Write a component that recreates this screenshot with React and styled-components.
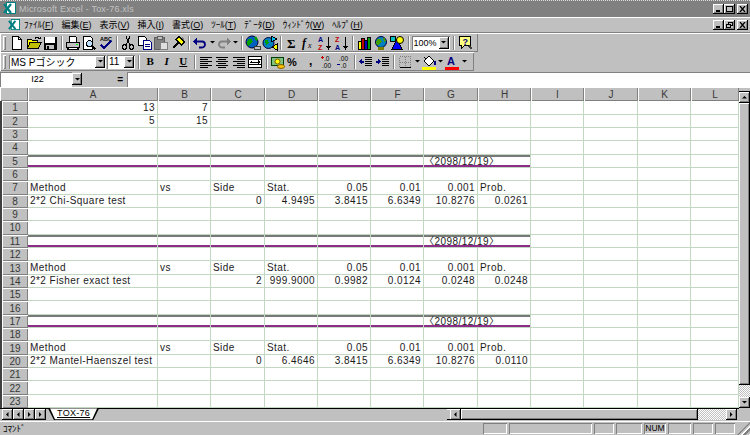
import React from 'react'
import styled, { createGlobalStyle } from 'styled-components'

const GlobalStyle = createGlobalStyle`
  html, body { margin: 0; padding: 0; background: #c0c0c0; }
  body { font-family: 'Liberation Sans', 'Noto Sans CJK JP', sans-serif; }
`

const raised = `box-shadow: inset -1px -1px #000, inset 1px 1px #fff, inset -2px -2px #808080;`
const sunken = `box-shadow: inset 1px 1px #808080, inset -1px -1px #fff;`
const stipple = `background: repeating-conic-gradient(#fff 0 25%, #c0c0c0 0 50%) 0 0 / 2px 2px;`

const Window = styled.div`
  width: 750px;
  height: 435px;
  overflow: hidden;
  background: #c0c0c0;
  display: flex;
  flex-direction: column;
`

const TitleBar = styled.div`
  height: 16px;
  border-top: 1px dotted #dfdfdf;
  background: #808080;
  display: flex;
  align-items: center;
  padding: 0 2px 0 3px;
  gap: 3px;
  color: #c0c0c0;
  font-size: 9px;
  letter-spacing: 0.2px;
`

const Caption = styled.div`
  margin-left: auto;
  display: flex;
  align-items: center;
`

const CapBtn = styled.div`
  width: 11px;
  height: 10px;
  margin-left: ${(p) => (p.$gap ? 2 : 0)}px;
  background: #c0c0c0;
  ${raised}
  display: flex;
  align-items: center;
  justify-content: center;
`

const MenuBar = styled.div`
  height: 16px;
  display: flex;
  align-items: center;
  padding: 0 2px 0 8px;
  font-size: 9px;
  color: #000;
  box-shadow: inset 0 1px #fff;
`

const MenuItem = styled.span`
  padding: 0 ${(p) => p.$pad ?? 4}px;
  white-space: nowrap;
  u { text-decoration: underline; }
`

const Toolbars = styled.div`
  display: flex;
  flex-direction: column;
  border-top: 1px solid #808080;
  box-shadow: inset 0 1px #fff;
`

const Toolbar = styled.div`
  height: 19px;
  width: ${(p) => p.$w}px;
  display: flex;
  align-items: center;
  padding-left: 2px;
  box-sizing: border-box;
  box-shadow: inset 1px 1px #fff, inset -1px -1px #808080;
`

const Grip = styled.div`
  width: 3px;
  height: 14px;
  margin: 0 3px 0 1px;
  box-shadow: inset 1px 1px #fff, inset -1px -1px #808080;
`

const Btn = styled.div`
  width: ${(p) => p.$w ?? 16.5}px;
  height: 16px;
  flex: none;
  display: flex;
  align-items: center;
  justify-content: center;
`

const Sep = styled.div`
  width: 0;
  height: 14px;
  margin: 0 ${(p) => p.$m ?? 2}px;
  border-left: 1px solid #808080;
  border-right: 1px solid #fff;
  flex: none;
`

const Combo = styled.div`
  width: ${(p) => p.$w}px;
  height: 14px;
  margin-right: 1px;
  background: #fff;
  ${sunken}
  display: flex;
  align-items: center;
  font-size: ${(p) => p.$fs ?? 10}px;
  color: #000;
  box-sizing: border-box;
  padding-left: 2px;
  flex: none;
  span { flex: 1; white-space: nowrap; }
`

const DropBtn = styled.div`
  width: 10px;
  height: 12px;
  background: #c0c0c0;
  ${raised}
  display: flex;
  align-items: center;
  justify-content: center;
  flex: none;
  margin-right: 1px;
`

const FontTxt = styled.span`
  font-family: ${(p) => (p.$serif ? "'Liberation Serif', serif" : "'Liberation Sans', sans-serif")};
  font-weight: ${(p) => (p.$bold ? 700 : 400)};
  font-style: ${(p) => (p.$italic ? 'italic' : 'normal')};
  text-decoration: ${(p) => (p.$under ? 'underline' : 'none')};
  font-size: ${(p) => p.$size ?? 11}px;
  color: ${(p) => p.$color ?? '#000'};
  line-height: 1;
`

const FormulaBar = styled.div`
  height: 16px;
  display: flex;
  align-items: center;
`

const NameBox = styled.div`
  width: 72px;
  height: 15px;
  background: #fff;
  box-sizing: border-box;
  ${sunken}
  font-size: 9px;
  text-align: center;
  padding-left: 3px;
  line-height: 15px;
  color: #000;
`

const EqBtn = styled.div`
  width: 44px;
  text-align: right;
  padding-right: 4px;
  box-sizing: border-box;
  font-size: 10px;
  font-weight: 700;
  color: #000;
`

const Formula = styled.div`
  flex: 1;
  height: 15px;
  background: #fff;
  ${sunken}
`

const Sheet = styled.div`
  height: 321px;
  display: flex;
  background: #fff;
`

const Grid = styled.div`
  width: 739px;
  height: 321px;
  display: grid;
  grid-template-columns: 28px 130px 53px 54px 53px 53px 53px 54px 53px 53px 54px 53px 48px;
  grid-template-rows: 14px repeat(24, 13.35px);
  overflow: hidden;
  background: #fff;
`

const Head = styled.div`
  background: #c0c0c0;
  box-shadow: inset 1px 1px #fff, inset -1px -1px #808080;
  font-size: 10px;
  color: #383838;
  display: flex;
  align-items: center;
  justify-content: center;
  ${(p) => p.$row && 'border-left: 2px solid #404040; box-sizing: border-box;'}
`

const line = '#c2d8c2'

const Cell = styled.div`
  border-right: ${(p) => (p.$open ? 'none' : `1px solid ${line}`)};
  border-bottom: 1px solid ${line};
  box-shadow: ${(p) => (p.$band ? 'inset 0 2px #787878, inset 0 -2px #8a2c88' : 'none')};
  font-size: 10px;
  letter-spacing: 0.45px;
  color: #1a1a1a;
  padding: 0 ${(p) => (p.$open ? 0 : 2)}px;
  white-space: nowrap;
  display: flex;
  align-items: center;
  justify-content: ${(p) => (p.$right ? 'flex-end' : 'flex-start')};
  min-width: 0;
`

const VScroll = styled.div`
  width: 11px;
  display: flex;
  flex-direction: column;
  background: #c0c0c0;
`

const ScrollBtn = styled.div`
  width: ${(p) => p.$w ?? 11}px;
  height: ${(p) => p.$h ?? 11}px;
  flex: none;
  background: #c0c0c0;
  ${raised}
  display: flex;
  align-items: center;
  justify-content: center;
`

const Track = styled.div`
  flex: none;
  width: ${(p) => p.$w ?? 11}px;
  height: ${(p) => p.$h ?? 11}px;
  ${stipple}
`

const SplitBox = styled.div`
  flex: none;
  width: ${(p) => p.$w ?? 11}px;
  height: ${(p) => p.$h ?? 11}px;
  background: #c0c0c0;
  box-shadow: inset 0 -1px #000, inset 0 1px #fff;
`

const TabBar = styled.div`
  height: 13px;
  display: flex;
  align-items: center;
  padding-left: 2px;
  box-shadow: inset 0 1px #000;
`

const NavBtn = styled.div`
  width: 11px;
  height: 11px;
  ${raised}
  display: flex;
  align-items: center;
  justify-content: center;
`

const Tab = styled.div`
  margin-left: 2px;
  height: 12px;
  align-self: flex-start;
  padding: 0 9px;
  background: #000;
  clip-path: polygon(0 0, 100% 0, calc(100% - 6px) 100%, 6px 100%);
  display: flex;
  span {
    flex: 1;
    background: #fff;
    clip-path: polygon(1px 0, calc(100% - 1px) 0, calc(100% - 6px) calc(100% - 1px), 6px calc(100% - 1px));
    margin: 0 -8px;
    padding: 0 8px;
    font-size: 9px;
    line-height: 11px;
    color: #000;
    text-decoration: underline;
    letter-spacing: 0.3px;
  }
`

const HScroll = styled.div`
  margin-left: auto;
  margin-right: 2px;
  width: 290px;
  height: 11px;
  display: flex;
`

const Corner = styled.div`
  width: 11px;
  height: 13px;
  background: #c0c0c0;
`

const StatusBar = styled.div`
  height: 14px;
  display: flex;
  align-items: center;
  padding-left: 3px;
  gap: 2px;
  font-size: 9px;
  color: #000;
  box-shadow: inset 0 1px #fff;
`

const Panel = styled.div`
  width: ${(p) => p.$w}px;
  height: 11px;
  ${sunken}
  font-size: 8.5px;
  line-height: 11px;
  text-align: center;
  color: #000;
  ${(p) => p.$first && 'margin-left: auto;'}
`

const SizeGrip = styled.div`
  width: 13px;
  height: 13px;
  align-self: flex-end;
  background: repeating-linear-gradient(135deg, #c0c0c0 0 2px, #fff 2px 3px, #808080 3px 5px);
  clip-path: polygon(100% 0, 100% 100%, 0 100%);
`

const Svg = ({ w = 16, h = 16, children }) => (
  <svg width={w} height={h} viewBox={`0 0 ${w} ${h}`} shapeRendering="crispEdges">
    {children}
  </svg>
)

const Tri = ({ dir = 'down', color = '#000' }) => {
  const pts = {
    down: '1,2 6,2 3.5,4.5',
    up: '1,4.5 6,4.5 3.5,2',
    left: '4.5,1 4.5,6 2,3.5',
    right: '2,1 2,6 4.5,3.5',
  }
  return (
    <svg width="7" height="7" viewBox="0 0 7 7">
      <polygon points={pts[dir]} fill={color} />
    </svg>
  )
}

const DropArrow = () => (
  <Btn $w={7}>
    <Tri />
  </Btn>
)

const icons = {
  new: (
    <>
      <path d="M3.5 1.5h6l3 3v10h-9z" fill="#fff" stroke="#000" />
      <path d="M9.5 1.5v3h3" fill="none" stroke="#000" />
    </>
  ),
  open: (
    <>
      <path d="M1.5 13.5v-9h4l1 1h5v2" fill="#ffff00" stroke="#000" />
      <path d="M1.5 13.5l2.5-6h11l-2.5 6z" fill="#c0c000" stroke="#000" />
      <path d="M9 3.5c1.5-2 3.5-2 4.5 0" fill="none" stroke="#000" />
      <path d="M11.5 3.5h3v-2" fill="none" stroke="#000" />
    </>
  ),
  save: (
    <>
      <rect x="1.5" y="1.5" width="13" height="13" fill="#000" />
      <rect x="3" y="2" width="10" height="6" fill="#fff" />
      <rect x="4" y="10" width="8" height="4" fill="#c0c0c0" />
      <rect x="5" y="11" width="2" height="3" fill="#000" />
    </>
  ),
  print: (
    <>
      <path d="M4.5 7.5v-6h6l1 1v5" fill="#fff" stroke="#000" />
      <path d="M1.5 7.5h13v5h-13z" fill="#c0c0c0" stroke="#000" />
      <path d="M3.5 12.5l-1 2h11l-1-2" fill="#fff" stroke="#000" />
      <rect x="11" y="9" width="2" height="1" fill="#00ff00" />
    </>
  ),
  preview: (
    <>
      <path d="M2.5 1.5h7l2 2v11h-9z" fill="#fff" stroke="#000" />
      <circle cx="8.5" cy="8.5" r="3" fill="#c0e0ff" stroke="#000" />
      <path d="M10.5 10.5l4 4" stroke="#000" strokeWidth="2" />
    </>
  ),
  spell: (
    <>
      <text x="2" y="6" fontSize="5.5" fontFamily="Liberation Sans" fontWeight="700" fill="#000">
        ABC
      </text>
      <path d="M3 10l3 3 7-7" fill="none" stroke="#000080" strokeWidth="2" />
    </>
  ),
  cut: (
    <>
      <circle cx="4.5" cy="12" r="2.2" fill="none" stroke="#000" />
      <circle cx="11.5" cy="12" r="2.2" fill="none" stroke="#000" />
      <path d="M6 10L10 1.5M10 10L6 1.5" stroke="#000" />
    </>
  ),
  copy: (
    <>
      <path d="M1.5 1.5h6l2 2v7h-8z" fill="#fff" stroke="#000" />
      <path d="M6.5 5.5h6l2 2v7h-8z" fill="#fff" stroke="#000080" />
      <path d="M8 9h5M8 11h5" stroke="#000080" />
    </>
  ),
  paste: (
    <>
      <rect x="1.5" y="2.5" width="10" height="12" fill="#808080" stroke="#606060" />
      <rect x="4" y="1" width="5" height="3" fill="#c0c0c0" stroke="#606060" />
      <rect x="7.5" y="7.5" width="7" height="7" fill="#dfdfdf" stroke="#808080" />
    </>
  ),
  painter: (
    <>
      <polygon points="9,1.5 14.5,7 11.5,10 6,4.5" fill="#ffff00" stroke="#000" />
      <path d="M8 8l-5 5" stroke="#000" strokeWidth="2" />
      <path d="M12 2.5l2 2" stroke="#808080" />
    </>
  ),
  undo: (
    <>
      <path d="M4 6.5h6a3 3 0 0 1 0 6H7" fill="none" stroke="#000080" strokeWidth="1.8" shapeRendering="auto" />
      <polygon points="1,6.5 5,3 5,10" fill="#000080" />
    </>
  ),
  redo: (
    <>
      <path d="M12 6.5H6a3 3 0 0 0 0 6h3" fill="none" stroke="#808080" strokeWidth="1.8" shapeRendering="auto" />
      <polygon points="15,6.5 11,3 11,10" fill="#808080" />
    </>
  ),
  link: (
    <>
      <circle cx="7" cy="7" r="6" fill="#0060c0" stroke="#000040" shapeRendering="auto" />
      <path d="M3 4h4l1 3-3 2-1 3-2-3zM9 2h3l1 3-2 1z" fill="#00a000" />
      <rect x="9" y="11" width="6" height="3" fill="#c0c0c0" stroke="#404040" />
    </>
  ),
  web: (
    <>
      <circle cx="6.5" cy="8" r="5.5" fill="#0080c0" stroke="#000040" shapeRendering="auto" />
      <path d="M3 5h3l1 3-3 2z" fill="#00a000" />
      <polygon points="9,1 15,4 9,7" fill="#00c0ff" stroke="#000" />
      <polygon points="15,9 10,12 15,15" fill="#ffff00" stroke="#000" />
    </>
  ),
  sum: (
    <text x="3" y="13" fontSize="13" fontFamily="Liberation Serif" fontWeight="700" fill="#000">
      Σ
    </text>
  ),
  fx: (
    <>
      <text x="1" y="12" fontSize="12" fontFamily="Liberation Serif" fontStyle="italic" fontWeight="700" fill="#000">
        f
      </text>
      <text x="7" y="13" fontSize="8" fontFamily="Liberation Serif" fontStyle="italic" fill="#000">
        x
      </text>
    </>
  ),
  sortAsc: (
    <>
      <text x="1" y="7" fontSize="7" fontFamily="Liberation Sans" fontWeight="700" fill="#000080">
        A
      </text>
      <text x="1" y="15" fontSize="7" fontFamily="Liberation Sans" fontWeight="700" fill="#c00000">
        Z
      </text>
      <path d="M11.5 2v11" stroke="#000" />
      <polygon points="9,11 14,11 11.5,15" fill="#000" />
    </>
  ),
  sortDesc: (
    <>
      <text x="1" y="7" fontSize="7" fontFamily="Liberation Sans" fontWeight="700" fill="#c00000">
        Z
      </text>
      <text x="1" y="15" fontSize="7" fontFamily="Liberation Sans" fontWeight="700" fill="#000080">
        A
      </text>
      <path d="M11.5 2v11" stroke="#000" />
      <polygon points="9,11 14,11 11.5,15" fill="#000" />
    </>
  ),
  chart: (
    <>
      <rect x="2" y="6" width="3" height="8" fill="#ffff00" stroke="#000" />
      <rect x="5" y="3" width="3" height="11" fill="#c00000" stroke="#000" />
      <rect x="8" y="5" width="3" height="9" fill="#0000c0" stroke="#000" />
      <rect x="11" y="2" width="3" height="12" fill="#00a000" stroke="#000" />
    </>
  ),
  map: (
    <>
      <circle cx="8" cy="7" r="5.5" fill="#0080c0" stroke="#000040" shapeRendering="auto" />
      <path d="M4 4h4l1 3-3 2-1 2-2-3zM10 3h2l1 3-2 1z" fill="#40a000" />
      <rect x="5" y="12" width="6" height="3" fill="#808000" />
    </>
  ),
  drawing: (
    <>
      <polygon points="3,14 8,4 13,14" fill="#0000ff" stroke="#000" />
      <circle cx="11" cy="5" r="3.5" fill="#ffff00" stroke="#000" shapeRendering="auto" />
      <rect x="1.5" y="1.5" width="5" height="5" fill="#00c0c0" stroke="#000" />
    </>
  ),
  assistant: (
    <>
      <path d="M2.5 1.5h11v9h-6l-3 3v-3h-2z" fill="#ffff80" stroke="#000" />
      <text x="5.5" y="9.5" fontSize="9" fontFamily="Liberation Sans" fontWeight="700" fill="#000080">
        ?
      </text>
      <path d="M12 11l3 3" stroke="#404040" strokeWidth="1.5" />
    </>
  ),
  alignL: <path d="M2 3.5h12M2 5.5h8M2 7.5h12M2 9.5h8M2 11.5h12M2 13.5h8" stroke="#000" />,
  alignC: <path d="M2 3.5h12M4 5.5h8M2 7.5h12M4 9.5h8M2 11.5h12M4 13.5h8" stroke="#000" />,
  alignR: <path d="M2 3.5h12M6 5.5h8M2 7.5h12M6 9.5h8M2 11.5h12M6 13.5h8" stroke="#000" />,
  merge: (
    <>
      <rect x="1.5" y="2.5" width="13" height="11" fill="#fff" stroke="#000" />
      <path d="M1.5 5.5h13M1.5 10.5h13" stroke="#000" />
      <path d="M3 8h10" stroke="#000" />
      <polygon points="3,8 5,6 5,10" fill="#000" />
      <polygon points="13,8 11,6 11,10" fill="#000" />
    </>
  ),
  currency: (
    <>
      <rect x="1.5" y="3.5" width="12" height="8" fill="#80c080" stroke="#004000" />
      <circle cx="7.5" cy="7.5" r="2.5" fill="#ffff00" stroke="#806000" shapeRendering="auto" />
      <ellipse cx="11" cy="12.5" rx="3.5" ry="2" fill="#ffc000" stroke="#806000" shapeRendering="auto" />
    </>
  ),
  percent: (
    <text x="1" y="12" fontSize="11" fontFamily="Liberation Sans" fontWeight="700" fill="#000">
      %
    </text>
  ),
  comma: (
    <text x="6" y="11" fontSize="12" fontFamily="Liberation Sans" fontWeight="700" fill="#000">
      ,
    </text>
  ),
  incDec: (
    <>
      <text x="5" y="7" fontSize="6.5" fontFamily="Liberation Sans" fill="#000">
        .0
      </text>
      <text x="3" y="14" fontSize="6.5" fontFamily="Liberation Sans" fill="#000">
        .00
      </text>
      <path d="M2 3.5h3M3.5 2v3" stroke="#c00000" />
    </>
  ),
  decDec: (
    <>
      <text x="3" y="7" fontSize="6.5" fontFamily="Liberation Sans" fill="#000">
        .00
      </text>
      <text x="5" y="14" fontSize="6.5" fontFamily="Liberation Sans" fill="#000">
        .0
      </text>
      <path d="M1 10.5h3" stroke="#000080" />
    </>
  ),
  outdent: (
    <>
      <path d="M7 3.5h7M7 5.5h7M7 7.5h7M7 9.5h7M7 11.5h7" stroke="#000" />
      <path d="M2 7.5h4" stroke="#000080" strokeWidth="2" />
      <polygon points="1,7.5 4,4.5 4,10.5" fill="#000080" />
    </>
  ),
  indent: (
    <>
      <path d="M7 3.5h7M7 5.5h7M7 7.5h7M7 9.5h7M7 11.5h7" stroke="#000" />
      <path d="M1 7.5h4" stroke="#000080" strokeWidth="2" />
      <polygon points="6,7.5 3,4.5 3,10.5" fill="#000080" />
    </>
  ),
  borders: (
    <>
      <rect x="2.5" y="2.5" width="11" height="11" fill="none" stroke="#808080" strokeDasharray="1 1" />
      <path d="M8 2.5v11M2.5 8h11" stroke="#808080" strokeDasharray="1 1" />
      <path d="M2.5 13.5h11" stroke="#000" />
    </>
  ),
  fill: (
    <>
      <polygon points="3,7 8,2 13,7 8,12" fill="#fff" stroke="#000" />
      <path d="M5 5L3 3" stroke="#000" />
      <path d="M13.5 7v4" stroke="#000080" strokeWidth="2" />
      <rect x="1" y="13" width="14" height="3" fill="#ffff00" />
    </>
  ),
  fontColor: (
    <>
      <text x="3" y="11" fontSize="11" fontFamily="Liberation Sans" fontWeight="700" fill="#000080">
        A
      </text>
      <rect x="1" y="13" width="14" height="3" fill="#ff0000" />
    </>
  ),
}

const Icon = ({ name, w }) => (
  <Btn $w={w}>
    <Svg>{icons[name]}</Svg>
  </Btn>
)

const ExcelLogo = ({ size = 13 }) => (
  <svg width={size} height={size} viewBox="0 0 13 13">
    <rect x="3.5" y="0.5" width="9" height="11" fill="#fff" stroke="#008080" />
    <path d="M1 2l7 9M8 2l-7 9" stroke="#008080" strokeWidth="2.2" />
  </svg>
)

const CapGlyph = ({ kind }) => (
  <svg width="7" height="6" viewBox="0 0 7 6" shapeRendering="crispEdges">
    {kind === 'min' && <rect x="1" y="4" width="4" height="2" fill="#000" />}
    {kind === 'max' && <rect x="0.5" y="0.5" width="6" height="5" fill="none" stroke="#000" />}
    {kind === 'restore' && (
      <>
        <rect x="2.5" y="0.5" width="4" height="3" fill="none" stroke="#000" />
        <rect x="0.5" y="2.5" width="4" height="3" fill="#c0c0c0" stroke="#000" />
      </>
    )}
    {kind === 'close' && <path d="M1 0l5 6M6 0l-5 6" stroke="#000" strokeWidth="1.3" shapeRendering="auto" />}
  </svg>
)

const CaptionButtons = ({ restore }) => (
  <Caption>
    <CapBtn>
      <CapGlyph kind="min" />
    </CapBtn>
    <CapBtn>
      <CapGlyph kind={restore ? 'restore' : 'max'} />
    </CapBtn>
    <CapBtn $gap>
      <CapGlyph kind="close" />
    </CapBtn>
  </Caption>
)

const menus = [
  ['ﾌｧｲﾙ', 'F'],
  ['編集', 'E'],
  ['表示', 'V'],
  ['挿入', 'I'],
  ['書式', 'O'],
  ['ﾂｰﾙ', 'T'],
  ['ﾃﾞｰﾀ', 'D'],
  ['ｳｨﾝﾄﾞｳ', 'W'],
  ['ﾍﾙﾌﾟ', 'H'],
]

const COLS = ['A', 'B', 'C', 'D', 'E', 'F', 'G', 'H', 'I', 'J', 'K', 'L']
const HEADER = { A: 'Method', B: 'vs', C: 'Side', D: 'Stat.', E: '0.05', F: '0.01', G: '0.001', H: 'Prob.' }
const BAND = { band: true, G: '〈2098/12/19〉' }

const data = {
  1: { A: '13', B: '7' },
  2: { A: '5', B: '15' },
  5: BAND,
  7: HEADER,
  8: { A: '2*2 Chi-Square test', C: '0', D: '4.9495', E: '3.8415', F: '6.6349', G: '10.8276', H: '0.0261' },
  11: BAND,
  13: HEADER,
  14: { A: '2*2 Fisher exact test', C: '2', D: '999.9000', E: '0.9982', F: '0.0124', G: '0.0248', H: '0.0248' },
  17: BAND,
  19: HEADER,
  20: { A: '2*2 Mantel-Haenszel test', C: '0', D: '6.4646', E: '3.8415', F: '6.6349', G: '10.8276', H: '0.0110' },
}

const isNum = (v) => /^[\d.]+$/.test(v)

function Row({ n }) {
  const row = data[n] || {}
  return (
    <>
      <Head $row>{n}</Head>
      {COLS.map((c, i) => {
        const v = row[c] || ''
        return (
          <Cell key={c} $right={isNum(v)} $band={row.band && i < 8} $open={row.band && c === 'G'}>
            {v}
          </Cell>
        )
      })}
    </>
  )
}

export default function App() {
  const rows = Array.from({ length: 24 }, (_, i) => i + 1)
  return (
    <>
      <GlobalStyle />
      <Window>
        <TitleBar>
          <ExcelLogo />
          <span>Microsoft Excel - Tox-76.xls</span>
          <CaptionButtons />
        </TitleBar>

        <MenuBar>
          <ExcelLogo size={12} />
          {menus.map(([label, key], i) => (
            <MenuItem key={key} $pad={i === 0 ? 4 : 4}>
              {label}(<u>{key}</u>)
            </MenuItem>
          ))}
          <CaptionButtons restore />
        </MenuBar>

        <Toolbars>
          <Toolbar $w={478}>
            <Grip />
            <Icon name="new" />
            <Icon name="open" />
            <Icon name="save" />
            <Sep />
            <Icon name="print" />
            <Icon name="preview" />
            <Icon name="spell" />
            <Sep />
            <Icon name="cut" />
            <Icon name="copy" />
            <Icon name="paste" />
            <Icon name="painter" />
            <Sep />
            <Icon name="undo" />
            <DropArrow />
            <Icon name="redo" />
            <DropArrow />
            <Sep />
            <Icon name="link" />
            <Icon name="web" />
            <Sep />
            <Icon name="sum" />
            <Icon name="fx" />
            <Icon name="sortAsc" />
            <Icon name="sortDesc" />
            <Sep />
            <Icon name="chart" />
            <Icon name="map" />
            <Icon name="drawing" />
            <Sep />
            <Combo $w={38} $fs={9}>
              <span>100%</span>
              <DropBtn>
                <Tri />
              </DropBtn>
            </Combo>
            <Sep />
            <Icon name="assistant" />
          </Toolbar>

          <Toolbar $w={474}>
            <Grip />
            <Combo $w={97}>
              <span>MS Pゴシック</span>
              <DropBtn>
                <Tri />
              </DropBtn>
            </Combo>
            <Combo $w={28}>
              <span>11</span>
              <DropBtn>
                <Tri />
              </DropBtn>
            </Combo>
            <Sep />
            <Btn>
              <FontTxt $serif $bold>B</FontTxt>
            </Btn>
            <Btn>
              <FontTxt $serif $bold $italic>I</FontTxt>
            </Btn>
            <Btn>
              <FontTxt $serif $bold $under>U</FontTxt>
            </Btn>
            <Sep />
            <Icon name="alignL" />
            <Icon name="alignC" />
            <Icon name="alignR" />
            <Icon name="merge" />
            <Sep />
            <Icon name="currency" />
            <Icon name="percent" />
            <Icon name="comma" />
            <Icon name="incDec" />
            <Icon name="decDec" />
            <Sep />
            <Icon name="outdent" />
            <Icon name="indent" />
            <Sep />
            <Icon name="borders" />
            <DropArrow />
            <Icon name="fill" />
            <DropArrow />
            <Icon name="fontColor" />
            <DropArrow />
          </Toolbar>
        </Toolbars>

        <FormulaBar>
          <NameBox>I22</NameBox>
          <DropBtn>
            <Tri />
          </DropBtn>
          <EqBtn>=</EqBtn>
          <Formula />
        </FormulaBar>

        <Sheet>
          <Grid>
            <Head />
            {COLS.map((c) => (
              <Head key={c}>{c}</Head>
            ))}
            {rows.map((n) => (
              <Row key={n} n={n} />
            ))}
          </Grid>
          <VScroll>
            <SplitBox $h={5} />
            <ScrollBtn>
              <Tri dir="up" />
            </ScrollBtn>
            <ScrollBtn $h={282} />
            <Track $h={12} />
            <ScrollBtn>
              <Tri dir="down" />
            </ScrollBtn>
          </VScroll>
        </Sheet>

        <TabBar>
          {['left', 'left', 'right', 'right'].map((d, i) => (
            <NavBtn key={i}>
              <Tri dir={d} />
            </NavBtn>
          ))}
          <Tab>
            <span>TOX-76</span>
          </Tab>
          <HScroll>
            <SplitBox $w={3} $h={11} />
            <ScrollBtn>
              <Tri dir="left" />
            </ScrollBtn>
            <ScrollBtn $w={237} />
            <Track $w={28} />
            <ScrollBtn>
              <Tri dir="right" />
            </ScrollBtn>
          </HScroll>
          <Corner />
        </TabBar>

        <StatusBar>
          <span>ｺﾏﾝﾄﾞ</span>
          <Panel $w={24} $first />
          <Panel $w={83} />
          <Panel $w={20} />
          <Panel $w={26} />
          <Panel $w={22}>NUM</Panel>
          <Panel $w={23} />
          <Panel $w={20} />
          <Panel $w={20} />
          <SizeGrip />
        </StatusBar>
      </Window>
    </>
  )
}
